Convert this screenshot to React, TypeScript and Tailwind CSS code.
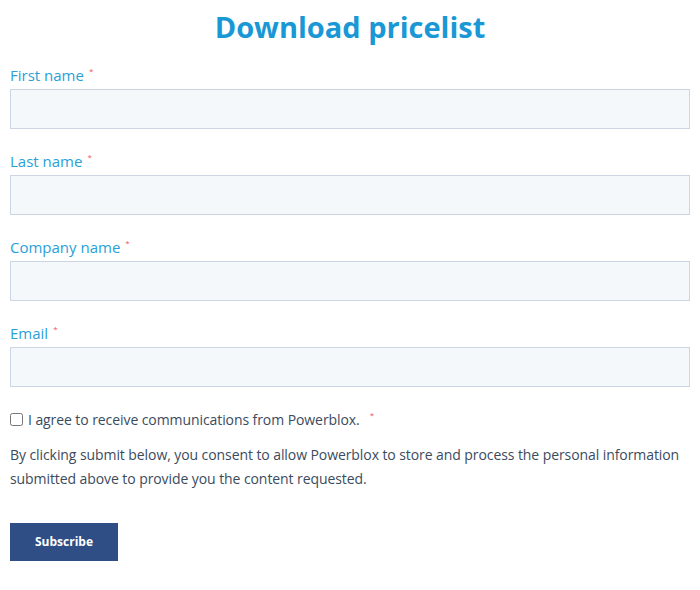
import React from 'react'

const Field: React.FC<{ label: string }> = ({ label }) => (
  <div className="mb-[22px]">
    <label className="flex h-5 items-center text-[15px] text-[#2a9fd8]">
      {label}
      <span className="ml-[5px] -mt-2 text-[8px] text-[#f2545b]">*</span>
    </label>
    <input
      type="text"
      className="mt-1 block h-10 w-full border border-[#cbd6e2] bg-[#f5f8fa] px-3 outline-none"
    />
  </div>
)

export default function App() {
  return (
    <div className="min-h-[590px] bg-white px-[10px] pt-[9px] text-[#3b4b5e]" style={{ fontFamily: '"Open Sans", "Liberation Sans", sans-serif' }}>
      <h1 className="mb-5 text-center text-[29px] font-bold leading-9 text-[#1a98d5]">Download pricelist</h1>

      <Field label="First name" />
      <Field label="Last name" />
      <Field label="Company name" />
      <Field label="Email" />

      <div className="flex h-5 items-center text-[14px] tracking-[-0.08px]">
        <input type="checkbox" className="m-0 h-[13px] w-[13px]" />
        <span className="ml-[5px]">I agree to receive communications from Powerblox.</span>
        <span className="ml-[10px] -mt-2 text-[8px] text-[#f2545b]">*</span>
      </div>

      <p className="mt-[14px] text-[14px] leading-6 tracking-[-0.08px]">
        By clicking submit below, you consent to allow Powerblox to store and process the personal information submitted above to provide you the content requested.
      </p>

      <button className="mt-8 h-[38px] w-[108px] bg-[#2e4e85] text-[12px] font-bold text-white">Subscribe</button>
    </div>
  )
}
